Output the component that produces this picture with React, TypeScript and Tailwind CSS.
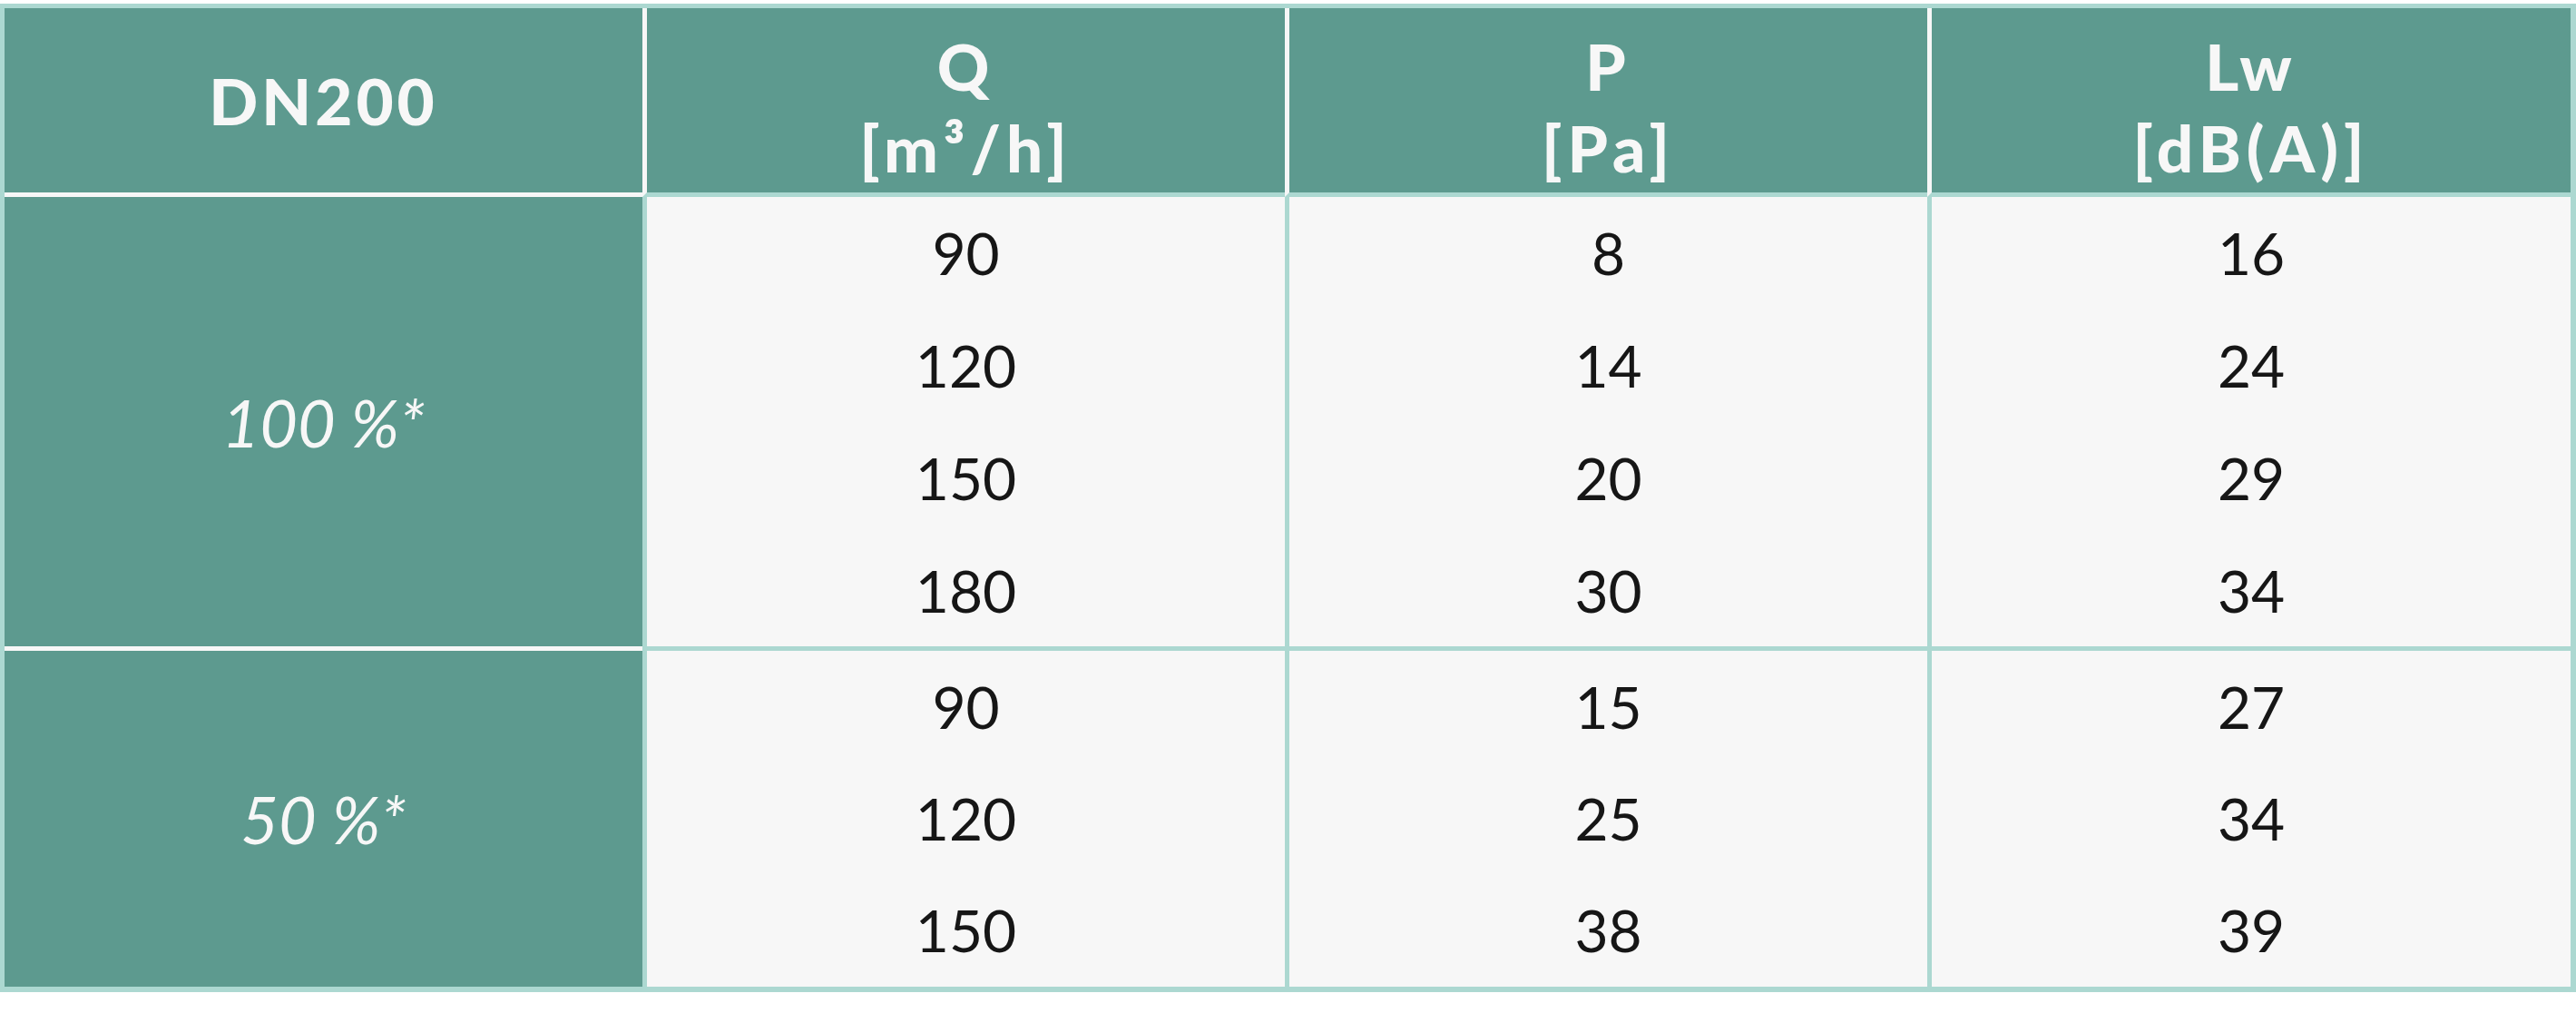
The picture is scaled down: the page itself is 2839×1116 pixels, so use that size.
const TEAL = "bg-[#5d9a8f]";

const groups = [
  {
    label: "100 %*",
    rows: [
      ["90", "8", "16"],
      ["120", "14", "24"],
      ["150", "20", "29"],
      ["180", "30", "34"],
    ],
  },
  {
    label: "50 %*",
    rows: [
      ["90", "15", "27"],
      ["120", "25", "34"],
      ["150", "38", "39"],
    ],
  },
];

const headers = [
  { top: "Q", unit: "[m³/h]" },
  { top: "P", unit: "[Pa]" },
  { top: "Lw", unit: "[dB(A)]" },
];

export default function App() {
  return (
    <div className="min-h-screen bg-white pt-[4px] font-['Lato','Liberation_Sans',sans-serif]">
      <table className="w-full table-fixed border-separate border-spacing-0 border-t-[5px] border-r-[6px] border-b-[6px] border-l-[5px] border-[#acd8d1]">
        <colgroup>
          <col className="w-[703px]" />
          <col className="w-[708px]" />
          <col className="w-[708px]" />
          <col />
        </colgroup>
        <thead>
          <tr>
            <th
              className={`${TEAL} h-[208px] border-b-[5px] border-[#f7f7f7] text-[71px] font-black leading-none tracking-[4px] text-[#f7f7f7]`}
            >
              DN200
            </th>
            {headers.map((h) => (
              <th
                key={h.top}
                className={`${TEAL} h-[208px] border-b-[5px] border-l-[5px] border-b-[#acd8d1] border-l-[#f7f7f7] pt-[14px] text-[71px] font-black leading-[90px] tracking-[6px] text-[#f7f7f7]`}
              >
                <div>{h.top}</div>
                <div>{h.unit}</div>
              </th>
            ))}
          </tr>
        </thead>
        <tbody>
          {groups.map((group, gi) => {
            const last = gi === groups.length - 1;
            return group.rows.map((row, ri) => {
              const lastRow = ri === group.rows.length - 1;
              const divider = lastRow && !last;
              const height = divider
                ? "h-[128px] border-b-[5px]"
                : last && ri < 2
                  ? "h-[123px]"
                  : "h-[124px]";
              return (
                <tr key={`${gi}-${ri}`}>
                  {ri === 0 && (
                    <td
                      rowSpan={group.rows.length}
                      className={`${TEAL} ${
                        last ? "" : "border-b-[5px] border-[#f7f7f7]"
                      } text-center text-[72px] font-normal italic text-[#f7f7f7]`}
                    >
                      {group.label}
                    </td>
                  )}
                  {row.map((cell, ci) => (
                    <td
                      key={ci}
                      className={`${height} border-l-[5px] border-[#acd8d1] bg-[#f7f7f7] text-center align-middle text-[64px] leading-none text-[#161616]`}
                    >
                      {cell}
                    </td>
                  ))}
                </tr>
              );
            });
          })}
        </tbody>
      </table>
    </div>
  );
}
